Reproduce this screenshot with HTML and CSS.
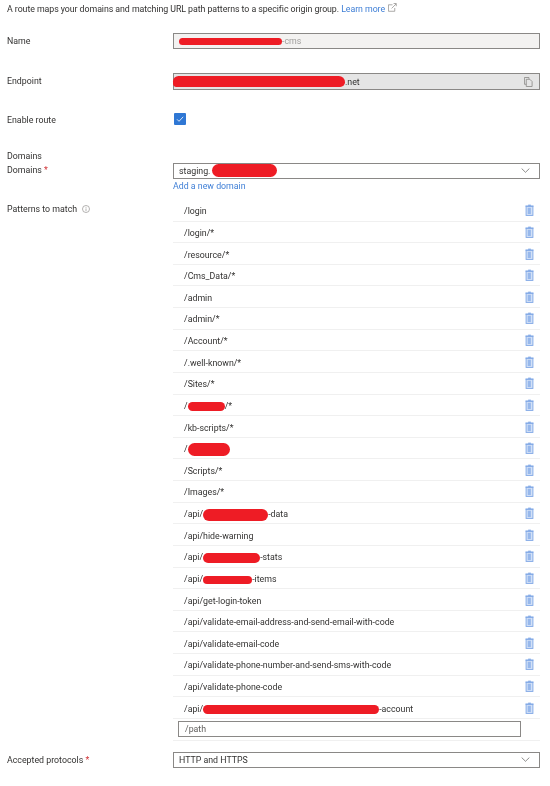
FILE: index.html
```html
<!DOCTYPE html>
<html lang="en">
<head>
    <meta charset="UTF-8">
    <meta name="viewport" content="width=device-width, initial-scale=1.0">
    <title>Add a route</title>
    <link rel="stylesheet" href="styles.css">
</head>
<body>
    <svg class="defs" width="0" height="0">
        <symbol id="trash" viewBox="0 0 10 13">
            <rect x="3.5" y="0.5" width="3" height="1.5" fill="#8fb2ea"/>
            <rect x="0.5" y="1.5" width="9" height="1.2" fill="#7ea6e6"/>
            <rect x="1.2" y="2.5" width="7.6" height="10" fill="#d3e1f7" stroke="#7ea6e6"/>
            <rect x="3" y="4" width="3.5" height="7" fill="#97b8ec"/>
        </symbol>
        <symbol id="chevron" viewBox="0 0 12 7">
            <path d="M0.6 0.8 6 6 11.4 0.8" fill="none" stroke="#605e5c" stroke-width="1"/>
        </symbol>
    </svg>

    <p class="intro">A route maps your domains and matching URL path patterns to a specific origin group.
        <a href="#">Learn more</a>
        <svg class="ext-icon" viewBox="0 0 10 10" width="9" height="9">
            <path d="M5 2H.5v7.2h7V5.5" fill="none" stroke="#8a8886" stroke-width="0.8"/>
            <path d="M4 6 9 1M6.2.6h3v3" fill="none" stroke="#8a8886" stroke-width="0.8"/>
        </svg>
    </p>

    <div class="row row-name">
        <label>Name</label>
        <div class="field readonly"><span class="blob blob-name"></span><span class="muted">-cms</span></div>
    </div>

    <div class="row row-endpoint">
        <label>Endpoint</label>
        <div class="field copy">
            <span class="blob blob-endpoint"></span><span>.net</span>
            <svg class="copy-icon" viewBox="0 0 10 11" width="9" height="10">
                <path d="M.5.5h5l0 1.5M2.5 2.5h4l2.5 2.5v5.500h-6.500zM.5.5v7.500h2" fill="none" stroke="#8a8886" stroke-width="0.9"/>
            </svg>
        </div>
    </div>

    <div class="row row-enable">
        <label>Enable route</label>
        <div class="checkbox">
            <svg viewBox="0 0 12 12" width="12" height="12">
                <path d="M3 6.300 5 8.300 9.200 3.800" fill="none" stroke="#fff" stroke-width="0.8"/>
            </svg>
        </div>
    </div>

    <div class="section-title">Domains</div>
    <div class="row">
        <label>Domains <span class="req">*</span></label>
        <div class="field select">
            <span>staging.</span><span class="blob blob-domain"></span>
            <svg class="chevron"><use href="#chevron"/></svg>
        </div>
    </div>
    <div class="row">
        <span></span>
        <a class="add-link" href="#">Add a new domain</a>
    </div>

    <div class="row row-patterns">
        <label>Patterns to match
            <svg class="info-icon" viewBox="0 0 10 10" width="8" height="8">
                <circle cx="5" cy="5" r="4.400" fill="none" stroke="#8a8886" stroke-width="0.8"/>
                <path d="M5 4.300v3.300M5 2.400v1" stroke="#8a8886" stroke-width="0.8"/>
            </svg>
        </label>
        <div class="patterns">
            <div class="pattern"><span>/login</span><svg class="trash"><use href="#trash"/></svg></div>
            <div class="pattern"><span>/login/*</span><svg class="trash"><use href="#trash"/></svg></div>
            <div class="pattern"><span>/resource/*</span><svg class="trash"><use href="#trash"/></svg></div>
            <div class="pattern"><span>/Cms_Data/*</span><svg class="trash"><use href="#trash"/></svg></div>
            <div class="pattern"><span>/admin</span><svg class="trash"><use href="#trash"/></svg></div>
            <div class="pattern"><span>/admin/*</span><svg class="trash"><use href="#trash"/></svg></div>
            <div class="pattern"><span>/Account/*</span><svg class="trash"><use href="#trash"/></svg></div>
            <div class="pattern"><span>/.well-known/*</span><svg class="trash"><use href="#trash"/></svg></div>
            <div class="pattern"><span>/Sites/*</span><svg class="trash"><use href="#trash"/></svg></div>
            <div class="pattern"><span>/<span class="blob blob-a"></span>/*</span><svg class="trash"><use href="#trash"/></svg></div>
            <div class="pattern"><span>/kb-scripts/*</span><svg class="trash"><use href="#trash"/></svg></div>
            <div class="pattern"><span>/<span class="blob blob-b"></span></span><svg class="trash"><use href="#trash"/></svg></div>
            <div class="pattern"><span>/Scripts/*</span><svg class="trash"><use href="#trash"/></svg></div>
            <div class="pattern"><span>/Images/*</span><svg class="trash"><use href="#trash"/></svg></div>
            <div class="pattern"><span>/api/<span class="blob blob-c"></span>-data</span><svg class="trash"><use href="#trash"/></svg></div>
            <div class="pattern"><span>/api/hide-warning</span><svg class="trash"><use href="#trash"/></svg></div>
            <div class="pattern"><span>/api/<span class="blob blob-d"></span>-stats</span><svg class="trash"><use href="#trash"/></svg></div>
            <div class="pattern"><span>/api/<span class="blob blob-e"></span>-items</span><svg class="trash"><use href="#trash"/></svg></div>
            <div class="pattern"><span>/api/get-login-token</span><svg class="trash"><use href="#trash"/></svg></div>
            <div class="pattern"><span>/api/validate-email-address-and-send-email-with-code</span><svg class="trash"><use href="#trash"/></svg></div>
            <div class="pattern"><span>/api/validate-email-code</span><svg class="trash"><use href="#trash"/></svg></div>
            <div class="pattern"><span>/api/validate-phone-number-and-send-sms-with-code</span><svg class="trash"><use href="#trash"/></svg></div>
            <div class="pattern"><span>/api/validate-phone-code</span><svg class="trash"><use href="#trash"/></svg></div>
            <div class="pattern"><span>/api/<span class="blob blob-f"></span>-account</span><svg class="trash"><use href="#trash"/></svg></div>
            <div class="pattern pattern-new">
                <input class="path-input" type="text" placeholder="/path">
            </div>
        </div>
    </div>

    <div class="row row-protocols">
        <label>Accepted protocols <span class="req">*</span></label>
        <div class="field select">
            <span>HTTP and HTTPS</span>
            <svg class="chevron"><use href="#chevron"/></svg>
        </div>
    </div>
</body>
</html>
```

FILE: styles.css
```css
body {
    margin: 0;
    background: #fff;
    color: #323130;
    font-family: Roboto, "Noto Sans", sans-serif;
    font-size: 8.8px;
    line-height: 14px;
    filter: blur(0.3px);
}
a { color: #3f7fd6; text-decoration: none; }
.defs { position: absolute; }
.intro {
    margin: 0 0 17px;
    padding: 2px 0 0 7px;
    white-space: nowrap;
    letter-spacing: -0.06px;
}
.ext-icon { margin-left: 1px; vertical-align: 0; }
.row {
    display: grid;
    grid-template-columns: 173px 1fr;
    padding-right: 10.500px;
}
.row label { padding-left: 7px; }
.row-name label, .row-endpoint label, .row-protocols label { padding-top: 1px; }
.row-endpoint { margin-top: 24px; }
.row-enable { margin-top: 23px; }
.row-patterns { margin-top: 6.800px; }
.row-patterns label { padding-top: 1.600px; }
.row-protocols { margin-top: 10.800px; }
.section-title { margin-top: 23px; padding-left: 7px; height: 13px; line-height: 13px; }
.req { color: #d13438; }
.muted { color: #a19f9d; }
.info-icon { margin-left: 3px; vertical-align: -1px; }

.field {
    display: flex;
    align-items: center;
    box-sizing: border-box;
    height: 16.400px;
    padding: 0 5px;
    border: 1px solid #8a8886;
    white-space: nowrap;
}
.readonly { background: #f3f2f1; }
.copy { background: #e5e5e5; padding-left: 0; }
.copy-icon { margin-left: auto; margin-right: 1px; }
.select { background: #fff; }
.chevron { width: 9px; height: 5px; margin-left: auto; margin-right: 4px; }
.checkbox {
    width: 12px;
    height: 12px;
    margin-left: 1px;
    background: #2f77d4;
    border-radius: 1px;
}
.checkbox svg { display: block; }
.add-link { line-height: 14px; }

.blob {
    display: inline-block;
    background: #ee1c25;
    border-radius: 6px;
    vertical-align: middle;
}
.blob-name { width: 103px; height: 7px; }
.blob-endpoint { width: 172px; height: 11px; margin-left: -1px; border-radius: 8px 9px 7px 5px; }
.blob-domain { width: 65px; height: 13px; margin-left: 2px; border-radius: 7px; }
.blob-a { width: 37px; height: 9px; }
.blob-b { width: 42px; height: 13px; border-radius: 7px; }
.blob-c { width: 65px; height: 12px; }
.blob-d { width: 57px; height: 10px; }
.blob-e { width: 49px; height: 8px; }
.blob-f { width: 176px; height: 9px; }

.pattern {
    display: flex;
    align-items: center;
    justify-content: space-between;
    box-sizing: border-box;
    height: 21.630px;
    padding: 0 5.500px 0 11px;
    border-bottom: 1px solid #f0f0f0;
    white-space: nowrap;
}
.pattern > span { padding-top: 2px; }
.trash { width: 9px; height: 12px; flex: none; }
.pattern-new {
    height: 22px;
    padding: 0 19px 0 5px;
}
.path-input {
    box-sizing: border-box;
    width: 100%;
    height: 16px;
    padding: 0 6px;
    border: 1px solid #8a8886;
    font: inherit;
    color: #323130;
    outline: none;
}
.path-input::placeholder { color: #605e5c; opacity: 1; }
```
